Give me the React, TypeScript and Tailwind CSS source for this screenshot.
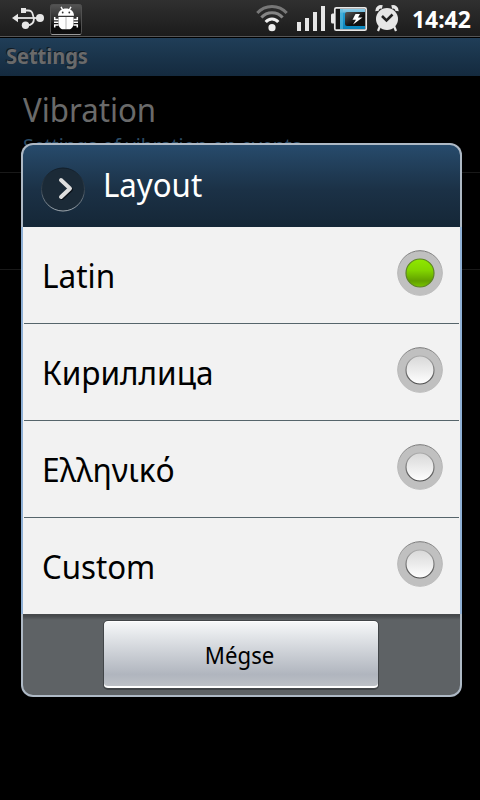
import React from "react";

const OPTIONS = [
  { label: "Latin", fit: "scale-x-[0.955]", selected: true },
  { label: "Кириллица", fit: "scale-x-[0.956]", selected: false },
  { label: "Ελληνικό", fit: "scale-x-[0.962]", selected: false },
  { label: "Custom", fit: "scale-x-[0.945]", selected: false },
];

function UsbIcon() {
  return (
    <svg width="34" height="24" viewBox="0 0 34 24" fill="none" stroke="#e6e6e6" strokeWidth="1.8">
      <path d="M5 12H30" />
      <path d="M14 4.5H17C23 4.5 21 9.5 23 12C23 17 20.5 19.3 16 19.3" />
      <path d="M1 12L7 7.7V16.3Z" fill="#e6e6e6" stroke="none" />
      <rect x="10" y="2" width="5" height="5" fill="#e6e6e6" stroke="none" />
      <circle cx="14.5" cy="19.3" r="3.7" fill="#e6e6e6" stroke="none" />
      <circle cx="29" cy="12" r="4" fill="#e6e6e6" stroke="none" />
    </svg>
  );
}

function BugIcon() {
  return (
    <svg width="32" height="32" viewBox="0 0 32 32">
      <defs>
        <linearGradient id="bug" x1="0" y1="0" x2="0" y2="1">
          <stop offset="0" stopColor="#555" />
          <stop offset="0.45" stopColor="#303030" />
          <stop offset="0.75" stopColor="#0a0a0a" />
          <stop offset="1" stopColor="#101010" />
        </linearGradient>
      </defs>
      <rect x="0.5" y="0.5" width="31" height="30" rx="2" fill="url(#bug)" stroke="#505050" />
      <path d="M1.5 30.5H30.5" stroke="#999" />
      <g fill="#fff">
        <path d="M8 11.8C8.3 2.2 23.7 2.2 24 11.8Z" />
        <path d="M8.5 13H23.5V20C23.5 23 21 25.3 19 25.3H13C11 25.3 8.5 23 8.5 20Z" />
      </g>
      <path d="M11 2.8L12.8 6M21 2.8L19.2 6" stroke="#fff" strokeWidth="1.4" />
      <path d="M4.7 13V15.5H8.5M27.3 13V15.5H23.5M4 18.3H8.5M28 18.3H23.5M4.7 23.5V21H8.5M27.3 23.5V21H23.5" fill="none" stroke="#fff" strokeWidth="1.5" />
      <path d="M16 13V25" stroke="#ccc" strokeWidth="1.4" />
      <circle cx="12.7" cy="8.5" r="0.9" fill="#333" />
      <circle cx="19.3" cy="8.5" r="0.9" fill="#333" />
    </svg>
  );
}

function WifiIcon() {
  return (
    <svg width="34" height="30" viewBox="0 0 34 30" fill="none" strokeWidth="3" strokeLinecap="butt">
      <path d="M2.3 10C10 1.3 24 1.3 31.7 10" stroke="#777" />
      <path d="M6.4 14.5C12 8.2 22 8.2 27.6 14.5" stroke="#858585" />
      <path d="M10.7 19C14 14.9 20 14.9 23.3 19" stroke="#f0f0f0" />
      <circle cx="17" cy="24.7" r="3.6" fill="#eee" />
    </svg>
  );
}

function SignalIcon() {
  return (
    <svg width="30" height="28" viewBox="0 0 30 28" fill="#e6e6e6">
      <rect x="1" y="18" width="4" height="9" />
      <rect x="9" y="14" width="4" height="13" />
      <rect x="17" y="8" width="4" height="19" />
      <rect x="25" y="2" width="4" height="25" />
    </svg>
  );
}

function BatteryIcon() {
  return (
    <svg width="38" height="26" viewBox="0 0 38 26">
      <defs>
        <linearGradient id="cell" x1="0" y1="0" x2="0" y2="1">
          <stop offset="0" stopColor="#8ccbe8" />
          <stop offset="0.14" stopColor="#74bfdf" />
          <stop offset="0.22" stopColor="#249dd2" />
          <stop offset="1" stopColor="#0783bb" />
        </linearGradient>
        <linearGradient id="plate" x1="0" y1="0" x2="1" y2="1">
          <stop offset="0" stopColor="#575757" />
          <stop offset="0.6" stopColor="#111" />
        </linearGradient>
      </defs>
      <path d="M6 7.5H2.5Q1 7.5 1 9V16Q1 17.5 2.5 17.5H6Z" fill="#e8e8e8" />
      <rect x="4.8" y="1.8" width="31.4" height="22.4" rx="1.5" fill="#151515" stroke="#e8e8e8" strokeWidth="1.7" />
      <rect x="10" y="3" width="25" height="20" fill="url(#cell)" />
      <rect x="10" y="3" width="3" height="20" fill="#5cbce0" opacity=".6" />
      <path d="M35 6H17Q15 6 15 8V18Q15 20 17 20H35Z" fill="url(#plate)" />
      <path d="M25.5 8H30L28 11.5H32.5L23 18.5L26 13.8H22.5Z" fill="#fff" />
    </svg>
  );
}

function AlarmIcon() {
  return (
    <svg width="26" height="28" viewBox="0 0 26 28" fill="none" stroke="#e6e6e6">
      <path d="M3 7C2.7 4 5.5 2.2 8.3 3M23 7C23.3 4 20.5 2.2 17.7 3" strokeWidth="3.5" />
      <path d="M6 22L4 27M20 22L22 27" strokeWidth="2.2" />
      <circle cx="13" cy="15" r="11" fill="#e6e6e6" stroke="none" />
      <path d="M8 12L12.5 16.5L18.5 10.5" stroke="#222" strokeWidth="2.5" />
    </svg>
  );
}

function Radio({ selected }: { selected: boolean }) {
  return (
    <svg width="48" height="48" viewBox="0 0 48 48" className="shrink-0">
      <defs>
        <linearGradient id="ring" x1="0" y1="0" x2="0" y2="1">
          <stop offset="0" stopColor="#777" />
          <stop offset="0.4" stopColor="#b5b5b5" />
          <stop offset="1" stopColor="#bdbdbd" />
        </linearGradient>
        <linearGradient id="on" x1="0" y1="0" x2="0" y2="1">
          <stop offset="0" stopColor="#8fe800" />
          <stop offset="0.4" stopColor="#82d500" />
          <stop offset="0.78" stopColor="#62a000" />
          <stop offset="1" stopColor="#78c400" />
        </linearGradient>
        <linearGradient id="off" x1="0" y1="0" x2="0" y2="1">
          <stop offset="0" stopColor="#d8d8d8" />
          <stop offset="0.5" stopColor="#ebebeb" />
          <stop offset="1" stopColor="#fff" />
        </linearGradient>
        <linearGradient id="rim" x1="0" y1="0" x2="0" y2="1">
          <stop offset="0" stopColor="#aaa" />
          <stop offset="1" stopColor="#4a4a4a" />
        </linearGradient>
      </defs>
      <circle cx="24" cy="24" r="22.3" fill="#c0c0c0" stroke="url(#ring)" />
      <circle cx="24" cy="24" r="14" fill={selected ? "url(#on)" : "url(#off)"} stroke={selected ? "#5d8425" : "url(#rim)"} strokeWidth="1.2" />
    </svg>
  );
}

export default function App() {
  return (
    <div className="relative flex h-[800px] w-[480px] flex-col overflow-hidden bg-black font-['Noto_Sans',sans-serif]">
      <header className="flex h-[38px] shrink-0 items-start justify-between border-b border-black bg-linear-to-b from-[#303030] to-[#1b1b1b] shadow-[inset_0_-1px_0_#555]">
        <div className="flex pl-[11px]">
          <div className="pt-[6px]"><UsbIcon /></div>
          <div className="ml-[5px] pt-[4px]"><BugIcon /></div>
        </div>
        <div className="flex pr-[9px]">
          <div className="pt-[3px]"><WifiIcon /></div>
          <div className="ml-[7px] pt-[4px]"><SignalIcon /></div>
          <div className="ml-[4px] pt-[6px]"><BatteryIcon /></div>
          <div className="ml-[6px] pt-[4px]"><AlarmIcon /></div>
          <div className="ml-[12px] w-[59px] pt-[4px]">
            <span className="block w-max origin-left scale-x-[0.995] text-[23px] leading-[30px] font-bold text-white">14:42</span>
          </div>
        </div>
      </header>

      <div className="flex h-[38px] shrink-0 items-start bg-linear-to-b from-[#203e58] to-[#142a3e] pt-[3px] pl-[6px]">
        <span className="origin-left scale-x-[0.95] text-[21px] leading-[30px] font-bold text-[#6a6a6a] [text-shadow:-1px_-1px_0_#101a24]">Settings</span>
      </div>

      <main className="flex flex-col">
        <div className="flex h-[97px] flex-col border-b border-[#191919] pt-[14px] pl-[23px]">
          <span className="w-max origin-left scale-x-[0.945] text-[33px] leading-[40px] text-[#6a6a6a]">Vibration</span>
          <span className="mt-px w-max origin-left scale-x-[0.975] text-[20px] leading-[30px] text-[#2c4c66]">Settings of vibration on events</span>
        </div>
        <div className="h-[97px] border-b border-[#191919]" />
      </main>

      <section className="absolute top-[143px] left-[21px] flex h-[554px] w-[441px] flex-col overflow-hidden rounded-[12px] bg-[#aeb9c5]">
        <div className="mx-[2px] mt-[2px] flex h-[82px] shrink-0 rounded-t-[10px] bg-linear-to-b from-[#274b6c] via-[#1b3146] via-55% to-[#152737] pl-[17px]">
          <svg width="46" height="46" viewBox="0 0 46 46" className="mt-[21px] shrink-0">
            <defs>
              <linearGradient id="disc" x1="0" y1="0" x2="0" y2="1">
                <stop offset="0" stopColor="#101c27" />
                <stop offset="0.5" stopColor="#33414d" />
                <stop offset="1" stopColor="#a0a9b0" />
              </linearGradient>
            </defs>
            <circle cx="23" cy="23.5" r="21.5" fill="#1b2a37" stroke="url(#disc)" />
            <path d="M21 14L30 22.5L21 31" transform="translate(1 1)" fill="none" stroke="#0b1118" strokeWidth="4" strokeLinecap="round" strokeLinejoin="round" />
            <path d="M21 14L30 22.5L21 31" fill="none" stroke="#dedede" strokeWidth="4" strokeLinecap="round" strokeLinejoin="round" />
          </svg>
          <span className="mt-[20px] ml-[16.5px] origin-left scale-x-[0.945] self-start text-[33px] leading-[40px] text-white">Layout</span>
        </div>

        <div className="flex shrink-0 flex-col bg-[#8fb0d5] px-[2px]">
          <ul className="flex h-[387px] flex-col bg-[#f2f2f2]">
            {OPTIONS.map((o, i) => (
              <li key={o.label} className="flex flex-col">
                <div className="flex h-[96px] items-start justify-between pr-[16px] pl-[19px]">
                  <span className={`mt-[29px] block w-max origin-left text-[33px] leading-[40px] text-black ${o.fit}`}>{o.label}</span>
                  <div className="mt-[22px]"><Radio selected={o.selected} /></div>
                </div>
                {i < OPTIONS.length - 1 && <div className="mx-px h-px bg-[#56656b]" />}
              </li>
            ))}
          </ul>
        </div>

        <div className="mx-[2px] flex h-[81px] shrink-0 rounded-b-[10px] bg-[#5e6265] bg-linear-to-b from-[#46494c] from-[2px] to-transparent to-[6px] pt-[6px] pl-[80px]">
          <button className="flex h-[70px] w-[276px] justify-center rounded-[5px] border border-b-2 border-[#414548] bg-linear-to-b from-[#f7f9fa] via-[#b0b5be] via-80% to-[#bfc3c8] pr-[2px] shadow-[inset_0_-2px_0_#fff,inset_0_1px_0_#fff]">
            <span className="mt-[18px] block scale-x-[0.925] text-[24px] leading-[32px] text-black">Mégse</span>
          </button>
        </div>
      </section>
    </div>
  );
}
